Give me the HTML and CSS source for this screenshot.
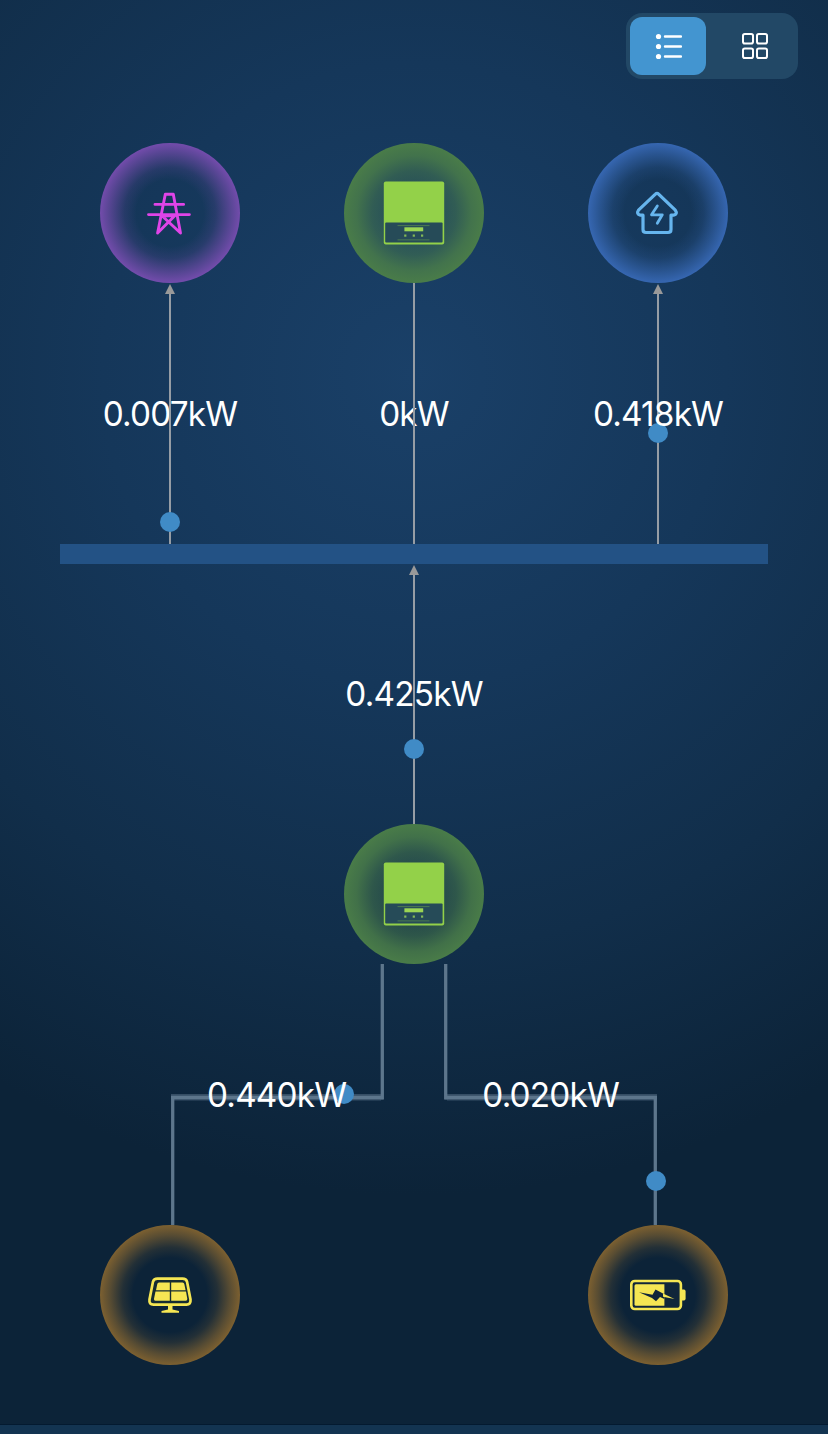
FILE: index.html
```html
<!DOCTYPE html>
<html lang="en">
<head>
<meta charset="UTF-8">
<meta name="viewport" content="width=device-width, initial-scale=1">
<title>Power Flow</title>
<link rel="stylesheet" href="styles.css">
</head>
<body>
<header class="toolbar">
  <div class="switch">
    <button class="switch-btn active" type="button">
      <svg width="28" height="28" viewBox="-1 0 28 28" fill="none" stroke="#fff" stroke-width="2.4" stroke-linecap="round">
        <g fill="#fff" stroke="none">
          <circle cx="3.5" cy="4.5" r="2.6"/><circle cx="3.5" cy="14.5" r="2.6"/><circle cx="3.5" cy="24.5" r="2.6"/>
        </g>
        <path d="M10 4.5h16M10 14.5h16M10 24.5h16"/>
      </svg>
    </button>
    <button class="switch-btn" type="button">
      <svg width="28" height="28" viewBox="0 0 28 28" fill="none" stroke="#fff" stroke-width="2">
        <rect x="3" y="2" width="10" height="9.5" rx="1.8"/>
        <rect x="17" y="2" width="10" height="9.5" rx="1.8"/>
        <rect x="3" y="16.5" width="10" height="9.5" rx="1.8"/>
        <rect x="17" y="16.5" width="10" height="9.5" rx="1.8"/>
      </svg>
    </button>
  </div>
</header>

<svg class="defs" width="0" height="0">
  <symbol id="inverter" viewBox="0 0 62 64">
    <rect x="0.8" y="0.6" width="60.4" height="62.8" rx="2" fill="#93d149"/>
    <rect x="2.2" y="41.6" width="57.4" height="20" rx="1" fill="#264b58"/>
    <path d="M14.5 44.6h32M14.5 58.900h32" stroke="#4f8050" stroke-width="0.9"/>
    <rect x="21.400" y="46.300" width="18.800" height="4" fill="#9bd454"/>
    <g fill="#83b957"><rect x="21.200" y="53.500" width="2.200" height="2.200"/><rect x="29.700" y="53.500" width="2.200" height="2.200"/><rect x="38" y="53.500" width="2.200" height="2.200"/></g>
  </symbol>
</svg>

<main class="flow">
  <section class="top">
    <div class="branch">
      <div class="node grid">
        <svg width="140" height="140" viewBox="0 0 140 140" fill="none" stroke="#e044e8" stroke-width="2.900" stroke-linecap="round" stroke-linejoin="round">
          <path d="M57.600 90L65.300 51.300H73.300L80.500 90L62.200 73L75 72.500L57.600 90M55 61.400H83.600M48.500 71.600H89.400"/>
        </svg>
      </div>
      <div class="link">
        <span class="value">0.007kW</span>
        <i class="line arrow"></i>
        <i class="dot dot-grid"></i>
      </div>
    </div>
    <div class="branch">
      <div class="node inverter"><svg width="62" height="64"><use href="#inverter"/></svg></div>
      <div class="link">
        <span class="value">0kW</span>
        <i class="line"></i>
      </div>
    </div>
    <div class="branch">
      <div class="node home">
        <svg width="140" height="140" viewBox="0 0 140 140" fill="none" stroke="#66b5ee" stroke-width="3.200" stroke-linecap="round" stroke-linejoin="round">
          <path d="M67.400 51.200Q69 49.600 70.600 51.200L87.300 67.200Q90 71 85.500 72.200H83V86.500Q83 89.500 80 89.500H58Q55 89.500 55 86.500V72.200H52.500Q48 71 50.500 67.200Z"/>
          <path d="M69.300 63L63.500 71.800H74.300L69.300 80.300" stroke-width="2.800"/>
        </svg>
      </div>
      <div class="link">
        <i class="line arrow"></i>
        <i class="dot dot-home"></i>
        <span class="value">0.418kW</span>
      </div>
    </div>
  </section>

  <div class="bus"></div>

  <section class="branch">
    <div class="link">
      <span class="value">0.425kW</span>
      <i class="line arrow"></i>
      <i class="dot dot-main"></i>
    </div>
    <div class="node inverter"><svg width="62" height="64"><use href="#inverter"/></svg></div>
  </section>

  <section class="split">
    <svg class="pipes" width="628" height="261" viewBox="0 0 628 261" fill="none" stroke="#5d768c">
      <path d="M282.300 0V135.500M345.700 0V135.500M72.700 261V132M555.300 261V132" stroke-width="3.300"/>
      <path d="M71 133.300H281M347 133.300H557" stroke-width="6.400" stroke-opacity="0.5"/>
      <path d="M71 133.500H283M345 133.500H557" stroke-width="3.500"/>
    </svg>
    <i class="dot dot-solar"></i>
    <i class="dot dot-battery"></i>
    <span class="value">0.440kW</span>
    <span class="value">0.020kW</span>
  </section>

  <section class="sources">
    <div class="node source">
      <svg width="140" height="140" viewBox="0 0 140 140">
        <path d="M57.500 53.600H82.500Q86.300 53.600 87 56.600L90.500 74.500Q91 79.700 86.500 79.700H53.500Q48.800 79.700 49.500 74.500L53 56.600Q53.800 53.600 57.500 53.600Z" fill="#152c32" stroke="#f5e653" stroke-width="2.700"/>
        <g fill="#f5e653">
          <path d="M59 57.400H69.800V65.200H56L57.300 58.900Q57.600 57.400 59 57.400ZM71.200 57.400H82.500Q84 57.400 84.300 58.900L85.600 65.200H71.200ZM55.500 66.600H69.800V75.800H55.500Q53.600 75.800 54 73.800ZM71.200 66.600H86L87.300 73.800Q87.500 75.800 85.700 75.800H71.200Z"/>
          <path d="M68 80H72.500V84.500L79 86V87.800H61.500V86L68 84.500Z"/>
        </g>
      </svg>
    </div>
    <div class="node source">
      <svg width="140" height="140" viewBox="0 0 140 140">
        <rect x="43.300" y="56" width="49.600" height="28" rx="3.500" fill="#10263a" stroke="#f5e653" stroke-width="2.600"/>
        <path d="M93.500 64.500H96Q97.600 64.500 97.600 66.500V73.500Q97.600 75.500 96 75.500H93.500Z" fill="#f5e653"/>
        <path d="M48 59.300H76.400V80.800H48Q46.500 80.800 46.500 79.300V60.800Q46.500 59.300 48 59.300Z" fill="#f5e653"/>
        <path d="M51 67.300L64.500 69.700L67.500 64.500L76.400 69.300V74L72 72L68 76.300L64 73Z" fill="#10263a"/>
        <path d="M75 68.600L86.500 74L75 71.800Z" fill="#f5e653"/>
      </svg>
    </div>
  </section>
</main>
<footer class="footer"></footer>
</body>
</html>
```

FILE: styles.css
```css
* {
  box-sizing: border-box;
}
body {
  margin: 0;
  height: 1434px;
  display: flex;
  flex-direction: column;
  overflow: hidden;
  background: radial-gradient(circle 820px at 414px 375px, #1a4068 0%, #15375a 38%, #112e4a 70%, #0c2338 100%);
  font-family: Inter, "Liberation Sans", sans-serif;
  color: #fff;
}
.defs {
  position: absolute;
}

/* view switch */
.toolbar {
  display: flex;
  justify-content: flex-end;
  height: 143px;
  padding: 13px 30px 0 0;
}
.switch {
  display: flex;
  gap: 10px;
  width: 172px;
  height: 66px;
  padding: 4px;
  border-radius: 16px;
  background: #224866;
}
.switch-btn {
  display: flex;
  align-items: center;
  justify-content: center;
  width: 76px;
  height: 58px;
  padding: 0;
  border: 0;
  border-radius: 12px;
  background: none;
}
.switch-btn.active {
  background: #4395d0;
}

/* nodes */
.flow {
  flex: 1;
}
.top,
.sources {
  display: flex;
  justify-content: space-between;
  padding: 0 100px;
}
.branch {
  display: flex;
  flex-direction: column;
  align-items: center;
}
.node {
  display: flex;
  align-items: center;
  justify-content: center;
  width: 140px;
  height: 140px;
  border-radius: 50%;
}
.node.grid {
  background: radial-gradient(circle closest-side, rgba(120, 77, 176, 0) 48%, rgba(120, 77, 176, .18) 65%, rgba(120, 77, 176, .6) 84%, rgba(120, 77, 176, .95) 100%);
}
.node.home {
  background: radial-gradient(circle closest-side, rgba(55, 104, 180, 0) 48%, rgba(55, 104, 180, .18) 65%, rgba(55, 104, 180, .6) 84%, rgba(55, 104, 180, .97) 100%);
}
.node.source {
  background: radial-gradient(circle closest-side, rgba(128, 98, 48, 0) 53%, rgba(128, 98, 48, .2) 68%, rgba(128, 98, 48, .66) 86%, rgba(128, 98, 48, .97) 100%);
}
.node.inverter {
  background: radial-gradient(circle closest-side, rgba(75, 126, 72, .25) 25%, rgba(75, 126, 72, .5) 60%, rgba(75, 126, 72, .83) 82%, rgba(75, 126, 72, .97) 100%);
}

/* links between nodes */
.link {
  position: relative;
  display: flex;
  align-items: center;
  justify-content: center;
  width: 140px;
  height: 261px;
}
.bus + .branch .link {
  height: 260px;
}
.value {
  position: relative;
  font-size: 33.3px;
  line-height: 40px;
  letter-spacing: -0.8px;
  white-space: nowrap;
}
.line {
  position: absolute;
  top: 0;
  left: 69px;
  width: 2px;
  height: 100%;
  background: #969da5;
}
.line.arrow {
  top: 3px;
  height: calc(100% - 3px);
}
.arrow::before {
  content: "";
  position: absolute;
  top: -2px;
  left: -4px;
  border: 5px solid transparent;
  border-top: 0;
  border-bottom: 10px solid #999;
}
.dot {
  position: absolute;
  width: 20px;
  height: 20px;
  border-radius: 50%;
  background: #408bc6;
}
.dot-grid { top: 229px; left: 60px; }
.dot-home { top: 140px; left: 60px; }
.dot-main { top: 175px; left: 60px; }
.dot-solar { top: 120px; left: 334px; }
.dot-battery { top: 207px; left: 646px; }

.bus {
  height: 20px;
  margin: 0 60px;
  background: #235285;
}

.split {
  position: relative;
  display: flex;
  align-items: center;
  justify-content: space-between;
  height: 261px;
  padding: 0 209px 0 207px;
}
.pipes {
  position: absolute;
  top: 0;
  left: 100px;
}

.footer {
  height: 10px;
  border-top: 1px solid #041a30;
  background: #133451;
}
```
